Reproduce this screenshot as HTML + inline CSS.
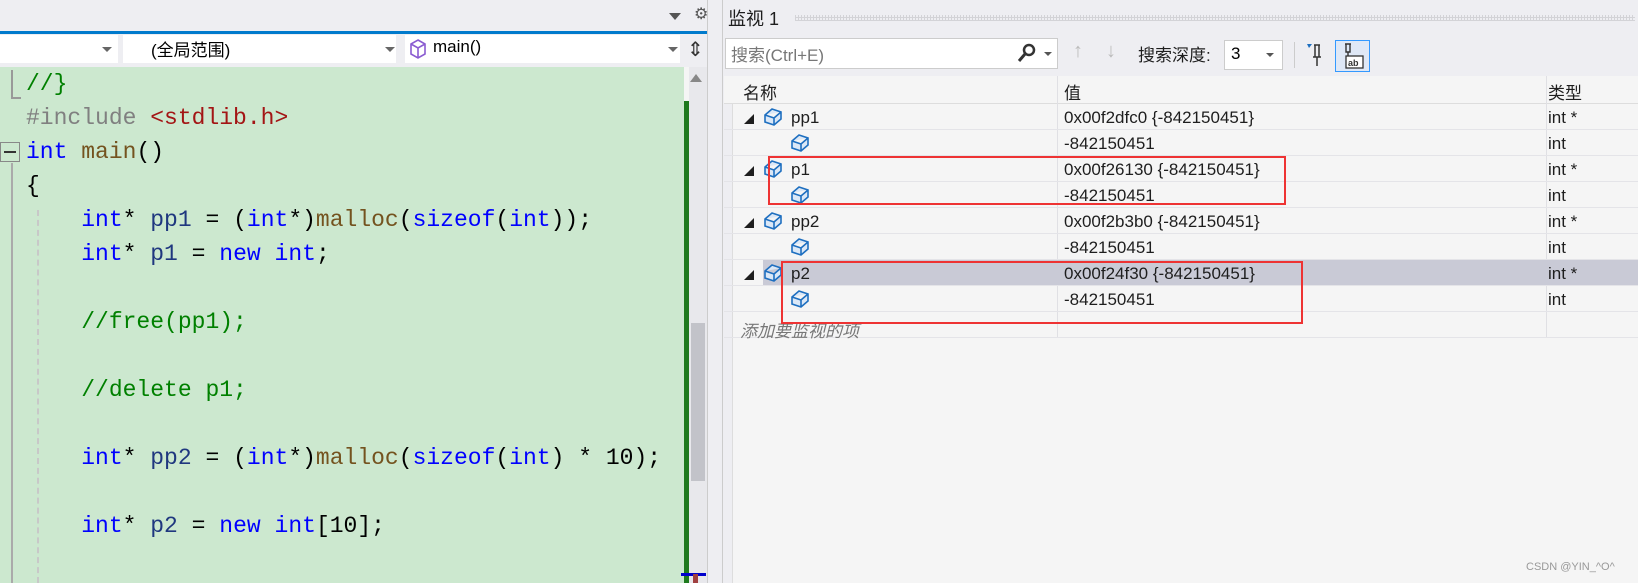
<!DOCTYPE html>
<html style="width:1638px;height:583px;overflow:hidden"><head><meta charset="utf-8"><style>
*{margin:0;padding:0;box-sizing:border-box}
body{width:1638px;height:583px;overflow:hidden;background:#f5f5f5;position:relative;font-family:"Liberation Sans","Noto Sans CJK SC",sans-serif}
.a{position:absolute}
.code{font-family:"Liberation Mono","Noto Sans CJK SC",monospace;font-size:23px;white-space:pre;color:#000}
.k{color:#0000ff}.f{color:#74531f}.c{color:#008000}.p{color:#808080}.s{color:#a31515}.v{color:#1f377f}
.row{position:absolute;left:724px;width:914px;height:26px;border-bottom:1px solid #e4e4e8;font-size:17px;color:#1e1e1e}
.row span{position:absolute;top:4px}
</style></head><body>
<div class="a" style="left:0;top:0;width:714px;height:32px;background:#eeeef2"></div>
<div class="a" style="left:669px;top:13px;width:0;height:0;border-left:6px solid transparent;border-right:6px solid transparent;border-top:7px solid #555"></div>
<div class="a" style="left:694px;top:4px;font-size:16px;color:#555">⚙</div>
<div class="a" style="left:0;top:31px;width:714px;height:3px;background:#007acc"></div>
<div class="a" style="left:0;top:34px;width:714px;height:33px;background:#eeeef2"></div>
<div class="a" style="left:0;top:35px;width:118px;height:28px;background:#fff"></div>
<div class="a" style="left:102px;top:47px;border-left:5px solid transparent;border-right:5px solid transparent;border-top:5px solid #666"></div>
<div class="a" style="left:123px;top:35px;width:273px;height:28px;background:#fff;font-size:17px;padding:1px 0 0 28px">(全局范围)</div>
<div class="a" style="left:385px;top:47px;border-left:5px solid transparent;border-right:5px solid transparent;border-top:5px solid #666"></div>
<div class="a" style="left:405px;top:35px;width:275px;height:28px;background:#fff;font-size:17px;padding:2px 0 0 28px">main()</div>
<svg class="a" style="left:409px;top:38px" width="18" height="22"><path d="M9 2 L16 6 L16 16 L9 20 L2 16 L2 6 Z M2 6 L9 10 L16 6 M9 10 L9 20" fill="none" stroke="#8a5cd1" stroke-width="1.6"/></svg>
<div class="a" style="left:668px;top:47px;border-left:5px solid transparent;border-right:5px solid transparent;border-top:5px solid #666"></div>
<div class="a" style="left:687px;top:37px;font-size:20px;color:#333">⇕</div>
<div class="a" style="left:0;top:67px;width:684px;height:516px;background:#cce8cf;overflow:hidden">
<div class="a" style="left:11px;top:3px;width:2px;height:28px;background:#999"></div>
<div class="a" style="left:11px;top:30px;width:10px;height:2px;background:#999"></div>
<div class="a" style="left:0;top:75px;width:20px;height:20px;border:1.5px solid #888;background:#cce8cf"></div>
<div class="a" style="left:4px;top:84px;width:12px;height:2px;background:#333"></div>
<div class="a" style="left:11px;top:96px;width:2px;height:420px;background:#aaa"></div>
<div class="a" style="left:37px;top:143px;width:0;height:373px;border-left:2px dashed #c8c8c8"></div>
<div class="a code" style="left:26px;top:0;line-height:34px"><span class="c">//}</span>
<span class="p">#include</span> <span class="s">&lt;stdlib.h&gt;</span>
<span class="k">int</span> <span class="f">main</span>()
{
    <span class="k">int</span>* <span class="v">pp1</span> = (<span class="k">int</span>*)<span class="f">malloc</span>(<span class="k">sizeof</span>(<span class="k">int</span>));
    <span class="k">int</span>* <span class="v">p1</span> = <span class="k">new</span> <span class="k">int</span>;

    <span class="c">//free(pp1);</span>

    <span class="c">//delete p1;</span>

    <span class="k">int</span>* <span class="v">pp2</span> = (<span class="k">int</span>*)<span class="f">malloc</span>(<span class="k">sizeof</span>(<span class="k">int</span>) * 10);

    <span class="k">int</span>* <span class="v">p2</span> = <span class="k">new</span> <span class="k">int</span>[10];

    <span class="c">//free(pp2);</span></div>
</div>
<div class="a" style="left:684px;top:101px;width:5px;height:482px;background:#1d7a1d"></div>
<div class="a" style="left:689px;top:67px;width:18px;height:516px;background:#e8e8ec"></div>
<div class="a" style="left:690px;top:74px;border-left:6px solid transparent;border-right:6px solid transparent;border-bottom:8px solid #888"></div>
<div class="a" style="left:691px;top:323px;width:14px;height:158px;background:#c2c3c9"></div>
<div class="a" style="left:681px;top:573px;width:25px;height:3px;background:#0000cc"></div>
<div class="a" style="left:693px;top:574px;width:5px;height:9px;background:#a04040"></div>
<div class="a" style="left:707px;top:0;width:16px;height:583px;background:#eeeef2;border-left:1px solid #ccc;border-right:1px solid #ccc"></div>

<div class="a" style="left:723px;top:0;width:915px;height:36px;background:#eeeef2"></div>
<div class="a" style="left:728px;top:5px;font-size:18px;color:#1e1e1e">监视 1</div>
<div class="a" style="left:795px;top:15px;width:840px;height:6px;background:repeating-linear-gradient(90deg,#c8c8cc 0 1px,transparent 1px 3px),repeating-linear-gradient(0deg,#c8c8cc 0 1px,transparent 1px 3px);opacity:.7"></div>
<div class="a" style="left:723px;top:36px;width:915px;height:40px;background:#eeeef2"></div>
<div class="a" style="left:725px;top:38px;width:333px;height:31px;background:#fff;border:1px solid #ccc;font-size:17px;color:#777;padding:2px 0 0 5px">搜索(Ctrl+E)</div>
<svg class="a" style="left:1016px;top:42px" width="22" height="22"><circle cx="13" cy="8" r="5" fill="none" stroke="#333" stroke-width="2.5"/><path d="M9 12 L3 19" stroke="#333" stroke-width="3"/></svg>
<div class="a" style="left:1044px;top:52px;border-left:4px solid transparent;border-right:4px solid transparent;border-top:4px solid #555"></div>
<div class="a" style="left:1073px;top:40px;font-size:20px;color:#bbb">↑</div>
<div class="a" style="left:1106px;top:40px;font-size:20px;color:#bbb">↓</div>
<div class="a" style="left:1138px;top:41px;font-size:17px;color:#1e1e1e">搜索深度:</div>
<div class="a" style="left:1224px;top:40px;width:59px;height:30px;background:#fff;border:1px solid #ccc;font-size:17px;padding:3px 0 0 6px">3</div>
<div class="a" style="left:1266px;top:53px;border-left:4px solid transparent;border-right:4px solid transparent;border-top:4px solid #555"></div>
<div class="a" style="left:1294px;top:42px;width:1px;height:26px;background:#ccc"></div>
<svg class="a" style="left:1305px;top:42px" width="20" height="26"><path d="M2 2 L7 2 L4 6 Z" fill="#1e6fc0"/><path d="M9 3 H15 M10 3 V15 H14 V3 M8 15 H16 M12 15 V24" stroke="#333" stroke-width="1.5" fill="none"/></svg>
<div class="a" style="left:1335px;top:40px;width:35px;height:32px;border:1.5px solid #3399ff;background:#dfe8f6"></div>
<svg class="a" style="left:1340px;top:42px" width="26" height="28"><path d="M5 2 H11 M6 2 V10 H10 V2 M8 10 V14" stroke="#333" stroke-width="1.4" fill="none"/><rect x="6" y="14" width="17" height="12" fill="#fff" stroke="#333" stroke-width="1.3"/><text x="8" y="24" font-size="9" font-family="Liberation Sans" font-weight="bold" fill="#333">ab</text></svg>
<div class="a" style="left:723px;top:76px;width:915px;height:507px;background:#f5f5f5"></div>
<div class="a" style="left:723px;top:76px;width:10px;height:507px;background:#eeeef2;border-right:1px solid #ddd"></div>
<div class="row" style="top:76px;height:28px;background:#f5f5f5;border-bottom:1px solid #ddd"><span style="left:19px;top:3px">名称</span><span style="left:340px;top:3px">值</span><span style="left:824px;top:3px">类型</span></div>
<div class="a" style="left:1057px;top:76px;width:1px;height:262px;background:#e0e0e4"></div>
<div class="a" style="left:1546px;top:76px;width:1px;height:262px;background:#e0e0e4"></div>
<div class="row" style="top:260px;left:763px;width:875px;background:#c9cad6"></div>

<div class="row" style="top:104px"><span style="left:20px;font-size:10px;top:7px">◢</span><span style="left:67px">pp1</span><span style="left:340px">0x00f2dfc0 {-842150451}</span><span style="left:824px">int *</span></div>
<div class="row" style="top:130px"><span style="left:340px">-842150451</span><span style="left:824px">int</span></div>
<div class="row" style="top:156px"><span style="left:20px;font-size:10px;top:7px">◢</span><span style="left:67px">p1</span><span style="left:340px">0x00f26130 {-842150451}</span><span style="left:824px">int *</span></div>
<div class="row" style="top:182px"><span style="left:340px">-842150451</span><span style="left:824px">int</span></div>
<div class="row" style="top:208px"><span style="left:20px;font-size:10px;top:7px">◢</span><span style="left:67px">pp2</span><span style="left:340px">0x00f2b3b0 {-842150451}</span><span style="left:824px">int *</span></div>
<div class="row" style="top:234px"><span style="left:340px">-842150451</span><span style="left:824px">int</span></div>
<div class="row" style="top:260px;background:none"><span style="left:20px;font-size:10px;top:7px">◢</span><span style="left:67px">p2</span><span style="left:340px">0x00f24f30 {-842150451}</span><span style="left:824px">int *</span></div>
<div class="row" style="top:286px"><span style="left:340px">-842150451</span><span style="left:824px">int</span></div>
<div class="row" style="top:312px"><span style="left:16px;color:#777;font-style:italic;top:5px">添加要监视的项</span></div>

<svg class="a" style="left:762px;top:106px" width="22" height="22"><path d="M3 9 L10 3 L19 6 L19 13 L12 19 L3 16 Z M3 9 L12 12 L19 6 M12 12 V19" fill="#dbe8f7" stroke="#1e6fc0" stroke-width="1.6"/></svg>
<svg class="a" style="left:789px;top:132px" width="22" height="22"><path d="M3 9 L10 3 L19 6 L19 13 L12 19 L3 16 Z M3 9 L12 12 L19 6 M12 12 V19" fill="#dbe8f7" stroke="#1e6fc0" stroke-width="1.6"/></svg>
<svg class="a" style="left:762px;top:158px" width="22" height="22"><path d="M3 9 L10 3 L19 6 L19 13 L12 19 L3 16 Z M3 9 L12 12 L19 6 M12 12 V19" fill="#dbe8f7" stroke="#1e6fc0" stroke-width="1.6"/></svg>
<svg class="a" style="left:789px;top:184px" width="22" height="22"><path d="M3 9 L10 3 L19 6 L19 13 L12 19 L3 16 Z M3 9 L12 12 L19 6 M12 12 V19" fill="#dbe8f7" stroke="#1e6fc0" stroke-width="1.6"/></svg>
<svg class="a" style="left:762px;top:210px" width="22" height="22"><path d="M3 9 L10 3 L19 6 L19 13 L12 19 L3 16 Z M3 9 L12 12 L19 6 M12 12 V19" fill="#dbe8f7" stroke="#1e6fc0" stroke-width="1.6"/></svg>
<svg class="a" style="left:789px;top:236px" width="22" height="22"><path d="M3 9 L10 3 L19 6 L19 13 L12 19 L3 16 Z M3 9 L12 12 L19 6 M12 12 V19" fill="#dbe8f7" stroke="#1e6fc0" stroke-width="1.6"/></svg>
<svg class="a" style="left:762px;top:262px" width="22" height="22"><path d="M3 9 L10 3 L19 6 L19 13 L12 19 L3 16 Z M3 9 L12 12 L19 6 M12 12 V19" fill="#dbe8f7" stroke="#1e6fc0" stroke-width="1.6"/></svg>
<svg class="a" style="left:789px;top:288px" width="22" height="22"><path d="M3 9 L10 3 L19 6 L19 13 L12 19 L3 16 Z M3 9 L12 12 L19 6 M12 12 V19" fill="#dbe8f7" stroke="#1e6fc0" stroke-width="1.6"/></svg>

<div class="a" style="left:768px;top:156px;width:518px;height:49px;border:2px solid #ee3333"></div>
<div class="a" style="left:781px;top:261px;width:522px;height:63px;border:2px solid #ee3333"></div>
<div class="a" style="left:1526px;top:561px;font-size:11px;color:#999">CSDN @YIN_^O^</div>
</body></html>
